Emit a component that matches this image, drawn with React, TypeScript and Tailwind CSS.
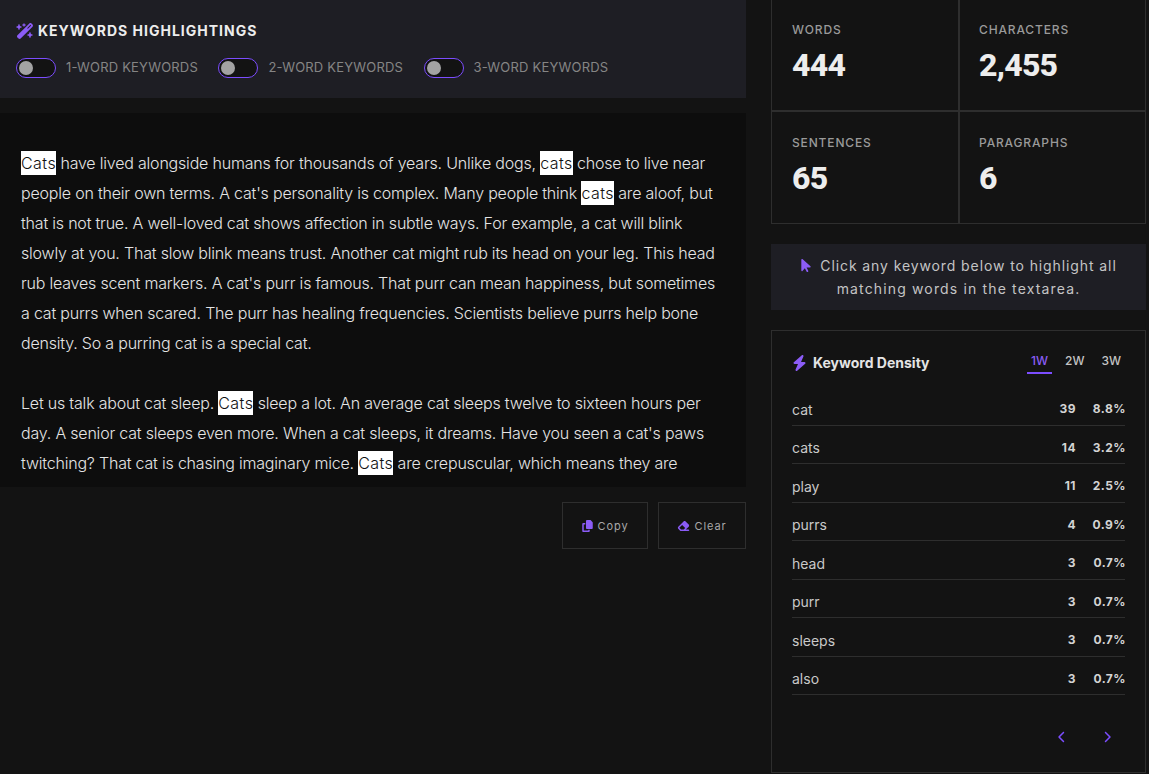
import React from "react";
import { FaWandMagicSparkles, FaArrowPointer, FaBolt, FaCopy, FaEraser, FaChevronLeft, FaChevronRight } from "react-icons/fa6";

type Line = (string | { h: string })[];
const para1: Line[] = [
  [{ h: "Cats" }, " have lived alongside humans for thousands of years. Unlike dogs, ", { h: "cats" }, " chose to live near"],
  ["people on their own terms. A cat's personality is complex. Many people think ", { h: "cats" }, " are aloof, but"],
  ["that is not true. A well-loved cat shows affection in subtle ways. For example, a cat will blink"],
  ["slowly at you. That slow blink means trust. Another cat might rub its head on your leg. This head"],
  ["rub leaves scent markers. A cat's purr is famous. That purr can mean happiness, but sometimes"],
  ["a cat purrs when scared. The purr has healing frequencies. Scientists believe purrs help bone"],
  ["density. So a purring cat is a special cat."],
  [" "],
  ["Let us talk about cat sleep. ", { h: "Cats" }, " sleep a lot. An average cat sleeps twelve to sixteen hours per"],
  ["day. A senior cat sleeps even more. When a cat sleeps, it dreams. Have you seen a cat's paws"],
  ["twitching? That cat is chasing imaginary mice. ", { h: "Cats" }, " are crepuscular, which means they are"],
];

const rows = [
  ["cat", "39", "8.8%"],
  ["cats", "14", "3.2%"],
  ["play", "11", "2.5%"],
  ["purrs", "4", "0.9%"],
  ["head", "3", "0.7%"],
  ["purr", "3", "0.7%"],
  ["sleeps", "3", "0.7%"],
  ["also", "3", "0.7%"],
];

function Toggle({ label }: { label: string }) {
  return (
    <div className="flex items-center gap-[10px]">
      <div className="flex h-5 w-10 items-center rounded-full border-[1.5px] border-[#7c4dff] bg-[#131313] pl-[2px]">
        <div className="h-[14px] w-[14px] rounded-full bg-[#a3a3a3]" />
      </div>
      <span className="text-[13px] tracking-[0.2px] text-[#858585]">{label}</span>
    </div>
  );
}

function Stat({ label, value, cls }: { label: string; value: string; cls: string }) {
  return (
    <div className={`border-[#2e2e2e] ${cls}`}>
      <div className="text-xs font-medium leading-4 tracking-[0.85px] text-[#9a9a9a]">{label}</div>
      <div className="mt-[7px] text-[32px] font-extrabold leading-10 tracking-[-0.75px] text-[#ededed]" style={{ fontFamily: '"Roboto", sans-serif' }}>{value}</div>
    </div>
  );
}

export default function App() {
  return (
    <div className="flex h-[774px] items-start overflow-hidden bg-[#131313] pr-[3px]" style={{ fontFamily: '"Inter", sans-serif' }}>
      <div className="w-[746px] shrink-0">
        <div className="h-[98px] bg-[#1e1e24] pl-4 pt-[21px]">
          <div className="flex items-center gap-[4px]">
            <FaWandMagicSparkles className="h-[16px] w-[18px] text-[#8b5cf6]" />
            <span className="text-sm font-bold leading-5 tracking-[1px] text-[#ededed]">KEYWORDS HIGHLIGHTINGS</span>
          </div>
          <div className="mt-[17px] flex gap-[20.5px]">
            <Toggle label="1-WORD KEYWORDS" />
            <Toggle label="2-WORD KEYWORDS" />
            <Toggle label="3-WORD KEYWORDS" />
          </div>
        </div>
        <div className="mt-[15px] h-[374px] overflow-hidden bg-[#0d0d0d] pl-[21px] pt-[35px] text-base font-[350] leading-[30px] tracking-[-0.2px] text-[#e4e4e4]">
          {para1.map((line, i) => (
            <div key={i} className="h-[30px] whitespace-pre">
              {line.map((seg, j) =>
                typeof seg === "string" ? (
                  <span key={j}>{seg}</span>
                ) : (
                  <span key={j} className="bg-white py-[2px] tracking-[0.45px] text-[#111111]">{seg.h}</span>
                )
              )}
            </div>
          ))}
        </div>
        <div className="mt-[15px] flex justify-end gap-[10px]">
          <button className="flex h-[47px] w-[86px] items-center justify-center gap-[5px] border border-[#2e2e2e] pt-[1px] text-[11px] tracking-[0.9px] text-[#a8a8a8]">
            <FaCopy className="h-3 w-[11px] text-[#8b5cf6]" />
            Copy
          </button>
          <button className="flex h-[47px] w-[88px] items-center justify-center gap-[4px] border border-[#2e2e2e] pt-[1px] text-[11px] tracking-[0.9px] text-[#a8a8a8]">
            <FaEraser className="h-3 w-[13px] text-[#8b5cf6]" />
            Clear
          </button>
        </div>
      </div>
      <div className="ml-[25px] w-[375px] shrink-0">
        <div className="grid grid-cols-[188px_185px] border-b border-l border-r border-[#2e2e2e]">
          <Stat label="WORDS" value="444" cls="h-[111.5px] border-r-2 border-b-2 pl-5 pt-[22px]" />
          <Stat label="CHARACTERS" value="2,455" cls="h-[111.5px] border-b-2 pl-[19px] pt-[22px]" />
          <Stat label="SENTENCES" value="65" cls="h-[111.5px] border-r-2 pl-5 pt-[23px]" />
          <Stat label="PARAGRAPHS" value="6" cls="h-[111.5px] pl-[19px] pt-[23px]" />
        </div>
        <div className="mt-5 flex h-[66px] flex-col items-center justify-center bg-[#1e1e24] text-sm leading-[23px] text-[#c4c4c4]">
          <div className="flex items-center tracking-[0.9px]">
            <FaArrowPointer className="mr-[8px] h-[15px] w-[12px] text-[#8b5cf6]" />
            Click any keyword below to highlight all
          </div>
          <div className="tracking-[1.15px]">matching words in the textarea.</div>
        </div>
        <div className="mt-5 h-[443px] border border-[#2e2e2e] px-5">
          <div className="flex h-[56px] items-center justify-between pt-2">
            <div className="flex items-center gap-[6px]">
              <FaBolt className="h-4 w-[15px] text-[#8b5cf6]" />
              <span className="text-sm font-bold text-[#e4e4e4]">Keyword Density</span>
            </div>
            <div className="flex gap-[9px] text-xs font-medium text-[#c4c4c4]">
              <span className="border-b-2 border-[#7c4dff] px-1 pb-[3px] text-[#8b5cf6]">1W</span>
              <span className="border-b-2 border-transparent px-1 pb-[3px]">2W</span>
              <span className="border-b-2 border-transparent px-1 pb-[3px]">3W</span>
            </div>
          </div>
          {rows.map(([k, n, p]) => (
            <div key={k} className="flex h-[38.5px] items-center justify-between border-b border-[#2e2e2e] pt-[8px]">
              <span className="text-sm text-[#c9c9c9]">{k}</span>
              <span className="-mr-[1px] -mt-[1px] flex text-xs font-bold tracking-[0.5px] text-[#d4d4d4]">
                <span>{n}</span>
                <span className="w-[50px] text-right">{p}</span>
              </span>
            </div>
          ))}
          <div className="mt-[36px] flex justify-end gap-[37px] pr-[14px] text-[#7c4dff]">
            <FaChevronLeft className="h-3 w-2" />
            <FaChevronRight className="h-3 w-2" />
          </div>
        </div>
      </div>
    </div>
  );
}
